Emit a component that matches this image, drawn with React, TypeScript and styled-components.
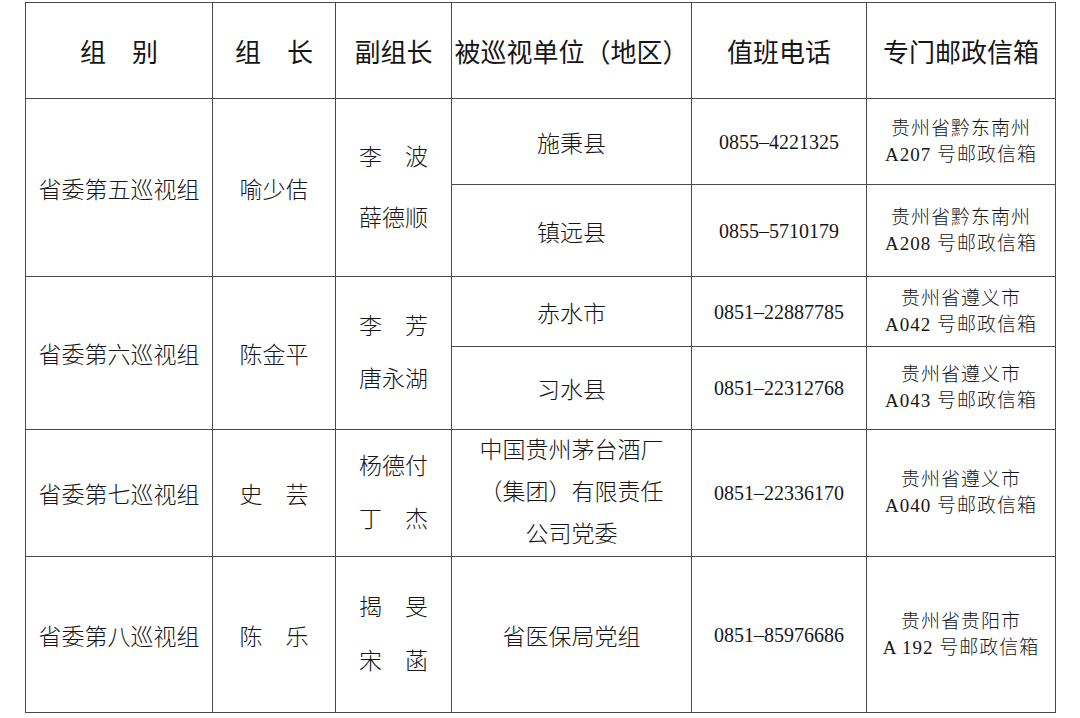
import React from "react";
import styled, { createGlobalStyle } from "styled-components";

const GlobalStyle = createGlobalStyle`
    html, body {
        margin: 0;
        padding: 0;
        background: #fff;
    }
`;

const Page = styled.div`
    width: 1080px;
    height: 718px;
    padding: 2px 0 0 25px;
    box-sizing: border-box;
    background: #fff;
`;

const Table = styled.table`
    width: 1030px;
    border-collapse: collapse;
    table-layout: fixed;
    color: #161616;
`;

const HeadCell = styled.th`
    border: 1px solid #4a4a4a;
    height: 95px;
    padding: 0;
    font-family: "Noto Sans CJK SC", "Noto Sans", sans-serif;
    font-size: 26px;
    font-weight: 400;
    text-align: center;
    vertical-align: middle;
    white-space: nowrap;
`;

const Cell = styled.td<{ $h?: number }>`
    border: 1px solid #4a4a4a;
    height: ${(p) => (p.$h ? `${p.$h}px` : "auto")};
    padding: 0;
    font-family: "Liberation Serif", "Noto Sans CJK SC", serif;
    font-weight: 300;
    font-size: 23px;
    text-align: center;
    vertical-align: middle;
    white-space: nowrap;
`;

const Names = styled.div<{ $gap: number }>`
    display: flex;
    flex-direction: column;
    align-items: center;
    gap: ${(p) => p.$gap}px;
    line-height: 1;
`;

const Unit = styled.div`
    line-height: 42px;
`;

const Phone = styled.span`
    font-family: "Liberation Serif", serif;
    font-weight: 400;
    font-size: 20px;
`;

const Mailbox = styled.div`
    font-size: 19px;
    letter-spacing: 1px;
    line-height: 26px;
`;

interface IUnit {
    name: React.ReactNode;
    phone: string;
    box: [string, string];
    h: number;
}

interface IGroup {
    group: string;
    leader: string;
    deputies: [string, string];
    gap: number;
    units: IUnit[];
}

const groups: IGroup[] = [
    {
        group: "省委第五巡视组",
        leader: "喻少佶",
        deputies: ["李　波", "薛德顺"],
        gap: 38,
        units: [
            { name: "施秉县", phone: "0855–4221325", box: ["贵州省黔东南州", "A207 号邮政信箱"], h: 85 },
            { name: "镇远县", phone: "0855–5710179", box: ["贵州省黔东南州", "A208 号邮政信箱"], h: 91 },
        ],
    },
    {
        group: "省委第六巡视组",
        leader: "陈金平",
        deputies: ["李　芳", "唐永湖"],
        gap: 30,
        units: [
            { name: "赤水市", phone: "0851–22887785", box: ["贵州省遵义市", "A042 号邮政信箱"], h: 69 },
            { name: "习水县", phone: "0851–22312768", box: ["贵州省遵义市", "A043 号邮政信箱"], h: 82 },
        ],
    },
    {
        group: "省委第七巡视组",
        leader: "史　芸",
        deputies: ["杨德付", "丁　杰"],
        gap: 30,
        units: [
            {
                name: (
                    <Unit>
                        中国贵州茅台酒厂
                        <br />
                        （集团）有限责任
                        <br />
                        公司党委
                    </Unit>
                ),
                phone: "0851–22336170",
                box: ["贵州省遵义市", "A040 号邮政信箱"],
                h: 126,
            },
        ],
    },
    {
        group: "省委第八巡视组",
        leader: "陈　乐",
        deputies: ["揭　旻", "宋　菡"],
        gap: 31,
        units: [
            { name: "省医保局党组", phone: "0851–85976686", box: ["贵州省贵阳市", "A 192 号邮政信箱"], h: 155 },
        ],
    },
];

export default function App() {
    return (
        <>
            <GlobalStyle />
            <Page>
                <Table>
                    <colgroup>
                        <col style={{ width: 187 }} />
                        <col style={{ width: 123 }} />
                        <col style={{ width: 116 }} />
                        <col style={{ width: 240 }} />
                        <col style={{ width: 175 }} />
                        <col style={{ width: 189 }} />
                    </colgroup>
                    <thead>
                        <tr>
                            <HeadCell>组　别</HeadCell>
                            <HeadCell>组　长</HeadCell>
                            <HeadCell>副组长</HeadCell>
                            <HeadCell>被巡视单位（地区）</HeadCell>
                            <HeadCell>值班电话</HeadCell>
                            <HeadCell>专门邮政信箱</HeadCell>
                        </tr>
                    </thead>
                    <tbody>
                        {groups.map((g) =>
                            g.units.map((u, i) => (
                                <tr key={g.group + i}>
                                    {i === 0 && (
                                        <>
                                            <Cell rowSpan={g.units.length}>{g.group}</Cell>
                                            <Cell rowSpan={g.units.length}>{g.leader}</Cell>
                                            <Cell rowSpan={g.units.length}>
                                                <Names $gap={g.gap}>
                                                    <span>{g.deputies[0]}</span>
                                                    <span>{g.deputies[1]}</span>
                                                </Names>
                                            </Cell>
                                        </>
                                    )}
                                    <Cell $h={u.h}>{u.name}</Cell>
                                    <Cell>
                                        <Phone>{u.phone}</Phone>
                                    </Cell>
                                    <Cell>
                                        <Mailbox>
                                            {u.box[0]}
                                            <br />
                                            {u.box[1]}
                                        </Mailbox>
                                    </Cell>
                                </tr>
                            ))
                        )}
                    </tbody>
                </Table>
            </Page>
        </>
    );
}
